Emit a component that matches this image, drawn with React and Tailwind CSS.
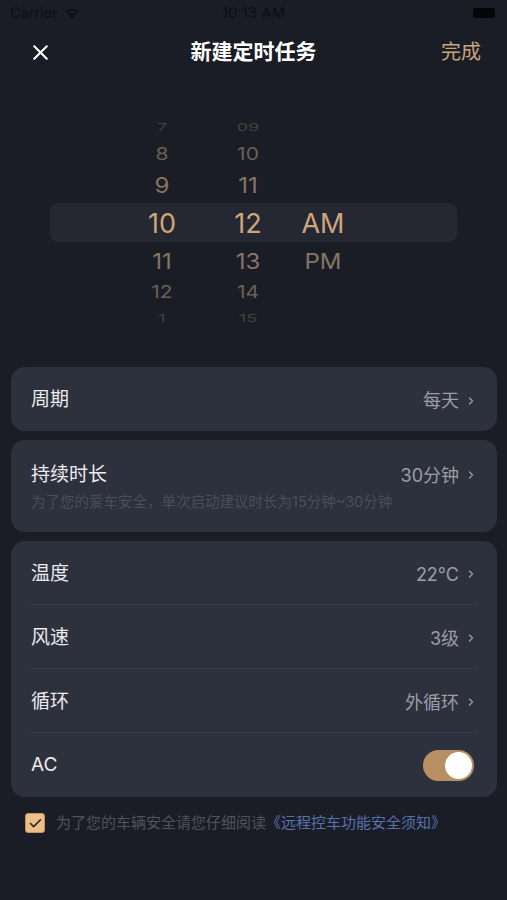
import { X, ChevronRight, Check } from 'lucide-react';

const font = { fontFamily: 'Inter, "Noto Sans CJK SC", sans-serif' };

const pickerRows = [
    { h: 'h-[26px]', hour: '7', min: '09', ampm: '', size: 'text-[18px] scale-y-[0.6]', color: 'text-[#45413c]' },
    { h: 'h-[28px]', hour: '8', min: '10', ampm: '', size: 'text-[21px] scale-y-[0.82]', color: 'text-[#6a6154]' },
    { h: 'h-[35px]', hour: '9', min: '11', ampm: '', size: 'text-[24px] scale-y-[0.92]', color: 'text-[#857662]' },
    { h: 'h-[39px]', hour: '10', min: '12', ampm: 'AM', size: 'text-[27px] pt-[3px]', color: 'text-[#cca67a]', active: true },
    { h: 'h-[36px]', hour: '11', min: '13', ampm: 'PM', size: 'text-[24px] scale-y-[0.92] pt-[3px]', color: 'text-[#857662]' },
    { h: 'h-[28px]', hour: '12', min: '14', ampm: '', size: 'text-[21px] scale-y-[0.82]', color: 'text-[#6a6154]' },
    { h: 'h-[24px]', hour: '1', min: '15', ampm: '', size: 'text-[18px] scale-y-[0.6]', color: 'text-[#45413c]' },
];

const Row = ({ label, value, divider }) => (
    <div className="px-5">
        <div className={`h-16 flex items-center justify-between pt-[3px] ${divider ? 'border-b border-[#3a3e4a]' : ''}`}>
            <span className="text-[19px] text-[#ebebed]">{label}</span>
            <span className="flex items-center gap-[6px] text-[18px] text-[#9c9ea5]">
                {value}
                <ChevronRight className="w-[12px] h-[12px] text-[#9c9ea5]" strokeWidth={2.5} />
            </span>
        </div>
    </div>
);

const App = () => (
    <div className="w-[507px] h-[900px] bg-[#1b1d26] overflow-hidden" style={font}>
        {/* status bar */}
        <div className="h-[26px] flex items-center justify-between px-[10px] text-[14.5px] text-[#0d0e13]">
            <div className="flex items-center gap-[6px]">
                <span>Carrier</span>
                <svg width="16" height="12" viewBox="0 0 16 12" fill="#0d0e13">
                    <path d="M8 11.5 5.6 8.9a3.4 3.4 0 0 1 4.8 0z" />
                    <path d="M3.8 7.1a6 6 0 0 1 8.4 0l-1.2 1.2a4.3 4.3 0 0 0-6 0z" />
                    <path d="M1.2 4.5a9.7 9.7 0 0 1 13.6 0l-1.2 1.2a8 8 0 0 0-11.2 0z" />
                </svg>
            </div>
            <span className="absolute left-1/2 -translate-x-1/2 text-[15px]">10:13 AM</span>
            <div className="w-[22px] h-[10px] rounded-[3px] bg-[#050507] mr-[2px]" />
        </div>

        {/* nav */}
        <div className="h-[52px] flex items-center justify-between px-[28px] relative">
            <X className="w-[25px] h-[25px] text-white" strokeWidth={2} />
            <span className="absolute left-1/2 -translate-x-1/2 text-[21px] font-semibold text-white">新建定时任务</span>
            <span className="text-[20px] text-[#c7a57d] -mr-[2px]">完成</span>
        </div>

        {/* picker */}
        <div className="mt-[36px] flex flex-col">
            {pickerRows.map((r, i) => (
                <div
                    key={i}
                    className={`${r.h} flex items-center mx-[50px] ${r.active ? 'bg-[#252833] rounded-lg' : ''}`}
                >
                    <div className={`flex items-center ${r.color}`}>
                        <span className={`w-[80px] ml-[72px] text-center inline-block ${r.size}`}>{r.hour}</span>
                        <span className={`w-[92px] text-center inline-block ${r.size}`}>{r.min}</span>
                        <span className={`w-[58px] text-center inline-block ${r.size}`}>{r.ampm}</span>
                    </div>
                </div>
            ))}
        </div>

        {/* cards */}
        <div className="mt-[37px] ml-[11px] mr-[10px] flex flex-col gap-[9px]">
            <div className="bg-[#2d313d] rounded-[14px]">
                <Row label="周期" value="每天" />
            </div>
            <div className="bg-[#2d313d] rounded-[14px] h-[92px] px-5 pt-[21px]">
                <div className="flex items-center justify-between">
                    <span className="text-[19px] text-[#ebebed]">持续时长</span>
                    <span className="flex items-center gap-[6px] text-[18px] text-[#9c9ea5]">
                        30分钟
                        <ChevronRight className="w-[12px] h-[12px]" strokeWidth={2.5} />
                    </span>
                </div>
                <div className="text-[14.5px] text-[#4a4e59] mt-[1px]">为了您的爱车安全，单次启动建议时长为15分钟~30分钟</div>
            </div>
            <div className="bg-[#2d313d] rounded-[14px]">
                <Row label="温度" value="22°C" divider />
                <Row label="风速" value="3级" divider />
                <Row label="循环" value="外循环" divider />
                <div className="px-5 h-16 flex items-center justify-between">
                    <span className="text-[19px] text-[#ebebed]">AC</span>
                    <div className="w-[51px] h-[31px] rounded-full bg-[#b88f60] flex items-center justify-end pr-[2px] mr-[3px]">
                        <div className="w-[27px] h-[27px] rounded-full bg-white" />
                    </div>
                </div>
            </div>
        </div>

        {/* agreement */}
        <div className="mt-[15px] ml-[25px] flex items-center gap-[11px] text-[15px]">
            <div className="w-[20px] h-[20px] rounded-[3px] bg-[#eebe89] border border-[#c29462] flex items-center justify-center">
                <Check className="w-[15px] h-[15px] text-[#2a2520]" strokeWidth={2.5} />
            </div>
            <span className="text-[#50535c]">
                为了您的车辆安全请您仔细阅读<span className="text-[#5773ad]">《远程控车功能安全须知》</span>
            </span>
        </div>
    </div>
);

export default App;
